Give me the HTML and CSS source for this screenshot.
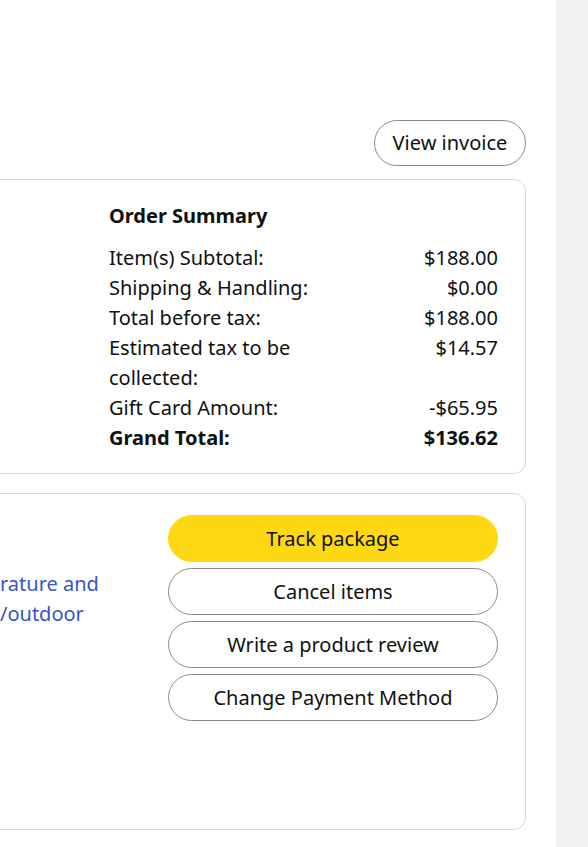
FILE: index.html
```html
<!DOCTYPE html>
<html lang="en">
<head>
<meta charset="utf-8">
<title>Order details</title>
<link rel="stylesheet" href="styles.css">
</head>
<body>
<div class="page">
  <main class="main">
    <div class="header-actions">
      <button class="btn btn-outline btn-invoice" type="button">View invoice</button>
    </div>

    <section class="card card-summary">
      <div class="card-left"></div>
      <div class="summary">
        <h2 class="summary-title">Order Summary</h2>
        <div class="summary-rows">
          <div class="row"><span class="label">Item(s) Subtotal:</span><span class="value">$188.00</span></div>
          <div class="row"><span class="label">Shipping &amp; Handling:</span><span class="value">$0.00</span></div>
          <div class="row"><span class="label">Total before tax:</span><span class="value">$188.00</span></div>
          <div class="row"><span class="label label-narrow">Estimated tax to be collected:</span><span class="value">$14.57</span></div>
          <div class="row"><span class="label">Gift Card Amount:</span><span class="value">-$65.95</span></div>
          <div class="row row-total"><span class="label">Grand Total:</span><span class="value">$136.62</span></div>
        </div>
      </div>
    </section>

    <section class="card card-item">
      <div class="item-info">
        <a class="item-link" href="#">rature and<br>/outdoor</a>
      </div>
      <div class="item-actions">
        <button class="btn btn-primary" type="button">Track package</button>
        <button class="btn btn-outline" type="button">Cancel items</button>
        <button class="btn btn-outline" type="button">Write a product review</button>
        <button class="btn btn-outline" type="button">Change Payment Method</button>
      </div>
    </section>
  </main>
  <aside class="aside"></aside>
</div>
</body>
</html>
```

FILE: styles.css
```css
* {
  box-sizing: border-box;
}

html, body {
  margin: 0;
  padding: 0;
  background: #ffffff;
}

body {
  font-family: "Noto Sans", "Liberation Sans", Arial, sans-serif;
  font-size: 20px;
  line-height: 30px;
  color: #0f1111;
}

.page {
  display: flex;
  min-height: 100vh;
}

.main {
  flex: 1;
  min-width: 0;
  padding: 120px 30px 0 0;
  overflow: hidden;
}

.aside {
  width: 32px;
  flex: none;
  background: #f0f2f2;
}

.header-actions {
  display: flex;
  justify-content: flex-end;
  margin-bottom: 13px;
}

.btn {
  font-family: inherit;
  font-size: 20px;
  line-height: 30px;
  color: #0f1111;
  border-radius: 24px;
  height: 47px;
  padding: 0 16px;
  cursor: pointer;
  display: flex;
  align-items: center;
  justify-content: center;
}

.btn-outline {
  background: #ffffff;
  border: 1px solid #888c8c;
}

.btn-primary {
  background: #ffd814;
  border: 1px solid #ffd814;
}

.btn-invoice {
  height: 46px;
  width: 152px;
}

.card {
  border: 1px solid #d5d9d9;
  border-radius: 12px;
  margin-left: -20px;
  display: flex;
}

.card-summary {
  margin-bottom: 19px;
}

.card-left {
  flex: 1;
}

.summary {
  width: 416px;
  padding: 21px 27px 20px 0;
}

.summary-title {
  margin: 0 0 12px;
  font-size: 20px;
  line-height: 30px;
  font-weight: 700;
}

.row {
  display: flex;
  justify-content: space-between;
  gap: 12px;
}

.label-narrow {
  max-width: 200px;
}

.value {
  text-align: right;
  white-space: nowrap;
}

.row-total {
  font-weight: 700;
}

.card-item {
  min-height: 337px;
}

.item-info {
  flex: 1;
  padding: 75px 0 0 19px;
}

.item-link {
  color: #3455c4;
  text-decoration: none;
}

.item-actions {
  width: 357px;
  padding: 21px 27px 0 0;
  display: flex;
  flex-direction: column;
  gap: 6px;
}
```
